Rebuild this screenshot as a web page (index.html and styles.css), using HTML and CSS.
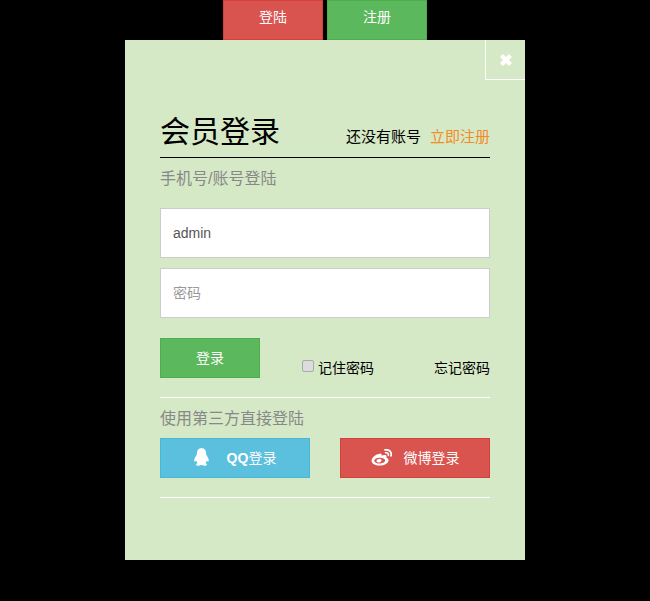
FILE: index.html
```html
<!DOCTYPE html>
<html lang="zh-CN">

<head>
    <meta charset="UTF-8">
    <meta name="viewport" content="width=device-width, initial-scale=1.0">
    <title>会员登录</title>
    <link rel="stylesheet" href="styles.css">
</head>

<body>
    <div class="top-btns">
        <a class="btn btn-red top-btn">登陆</a>
        <a class="btn btn-green top-btn">注册</a>
    </div>
    <div class="modal">
        <a class="close">
            <svg viewBox="0 0 14 14" width="14" height="14">
                <path d="M1 4 L4 1 L7 4 L10 1 L13 4 L10 7 L13 10 L10 13 L7 10 L4 13 L1 10 L4 7 Z" fill="#fff" />
            </svg>
        </a>
        <div class="head">
            <span class="head-title">会员登录</span>
            <span class="head-reg">还没有账号<a class="reg-link">立即注册</a></span>
        </div>
        <p class="sub sub-first">手机号/账号登陆</p>
        <input class="field" type="text" value="admin">
        <input class="field field-pass" type="password" placeholder="密码">
        <div class="actions">
            <a class="btn btn-green login-btn">登录</a>
            <label class="remember"><input type="checkbox">记住密码</label>
            <a class="forgot">忘记密码</a>
        </div>
        <p class="sub sub-second">使用第三方直接登陆</p>
        <div class="social">
            <a class="btn btn-blue social-btn">
                <svg class="icon-qq" viewBox="0 0 15 18" width="15" height="18">
                    <path d="M7.5 0 C4.5 0 3 2.2 3 5 C3 6.2 2.6 7 1.8 8.3 C0.8 10 0 11.8 0.3 13.2 C0.5 14 1.3 13.6 2.2 12.4 C2.5 13.6 3 14.6 3.6 15.2 C2.4 15.6 1.8 16.2 2.2 17 C2.8 18 5.6 18 7 17 L8 17 C9.4 18 12.2 18 12.8 17 C13.2 16.2 12.6 15.6 11.4 15.2 C12 14.6 12.5 13.6 12.8 12.4 C13.7 13.6 14.5 14 14.7 13.2 C15 11.8 14.2 10 13.2 8.3 C12.4 7 12 6.2 12 5 C12 2.2 10.5 0 7.5 0 Z" fill="#fff" />
                </svg>
                <span class="social-text"><b class="qq">QQ</b>登录</span>
            </a>
            <a class="btn btn-red social-btn">
                <svg class="icon-weibo" viewBox="0.5 2 19.5 16.5" width="21" height="17" preserveAspectRatio="none">
                    <path fill-rule="evenodd" d="M9 6.5 C4.8 7 1 10.2 1 13.4 C1 16.4 4.6 18 8.4 18 C13 18 16.8 15.6 16.8 12.8 C16.8 11.4 15.6 10.8 14.7 10.5 C15.1 9.5 15.1 8.6 14.4 8.1 C13.4 7.4 11.6 7.8 10.2 8.4 C10.5 7.4 10.4 6.3 9 6.5 Z M8.2 10.6 C11 10.4 13.4 11.4 13.6 13 C13.7 14.6 11.8 15.9 9 16.1 C6.1 16.3 3.8 15.2 3.6 13.6 C3.5 12 5.4 10.8 8.2 10.6 Z" fill="#fff" />
                    <path d="M8 11.6 C6.4 11.8 5.3 12.8 5.6 14 C6 15.1 7.4 15.5 8.7 15 C10 14.5 10.6 13.4 10.2 12.5 C9.8 11.8 8.9 11.5 8 11.6 Z" fill="#fff" />
                    <path d="M13.5 2.9 C17.3 2.1 20 5 19.1 8.6" fill="none" stroke="#fff" stroke-width="1.7" stroke-linecap="round" />
                    <path d="M14 5.6 C15.8 5.3 17 6.4 16.6 8.2" fill="none" stroke="#fff" stroke-width="1.5" stroke-linecap="round" />
                </svg>
                <span class="social-text">微博登录</span>
            </a>
        </div>
        <div class="foot-line"></div>
    </div>
</body></html>
```

FILE: styles.css
```css
html,
body {
    margin: 0;
    padding: 0;
    height: 601px;
    background: #000;
    font-family: "Liberation Sans", "Noto Sans CJK SC", sans-serif;
    font-size: 14px;
    overflow: hidden;
}

.btn {
    display: flex;
    align-items: center;
    justify-content: center;
    box-sizing: border-box;
    height: 40px;
    padding-bottom: 2px;
    color: #fff;
    border: 1px solid transparent;
}

.btn-red {
    background: #d9534f;
    border-color: #d43f3a;
}

.btn-green {
    background: #5cb85c;
    border-color: #4cae4c;
}

.btn-blue {
    background: #5bc0de;
    border-color: #46b8da;
}

.top-btns {
    display: flex;
    justify-content: center;
    gap: 4px;
}

.top-btn {
    width: 100px;
    padding-bottom: 9px;
}

.modal {
    position: relative;
    box-sizing: border-box;
    width: 400px;
    height: 520px;
    margin: 0 auto;
    padding: 0 35px;
    background: #d6e9c6;
}

.close {
    position: absolute;
    top: 0;
    right: 0;
    display: flex;
    align-items: center;
    justify-content: center;
    box-sizing: border-box;
    width: 40px;
    height: 40px;
    border-left: 1px solid #fff;
    border-bottom: 1px solid #fff;
}

.head {
    display: flex;
    justify-content: space-between;
    align-items: flex-end;
    box-sizing: border-box;
    height: 118px;
    padding-bottom: 10px;
    border-bottom: 1px solid #000;
    color: #000;
}

.head-title {
    font-size: 30px;
    line-height: 30px;
}

.head-reg {
    font-size: 15px;
    line-height: 20px;
}

.reg-link {
    margin-left: 9px;
    color: #f28c28;
}

.sub {
    margin: 0;
    color: #888;
    font-size: 16px;
    line-height: 22px;
}

.sub-first {
    margin-top: 10px;
    margin-bottom: 18px;
}

.sub-second {
    margin-top: 10px;
    margin-bottom: 8px;
}

.field {
    display: block;
    box-sizing: border-box;
    width: 100%;
    height: 50px;
    padding: 0 12px 1px;
    border: 1px solid #ccc;
    background: #fff;
    color: #555;
    font-family: inherit;
    font-size: 14px;
    outline: none;
}

.field-pass {
    margin-top: 10px;
}

.field::placeholder {
    color: #999;
}

.actions {
    display: flex;
    align-items: flex-end;
    height: 59px;
    margin-top: 20px;
    border-bottom: 1px solid #fff;
    color: #000;
}

.login-btn {
    width: 100px;
    align-self: flex-start;
}

.remember {
    display: flex;
    align-items: center;
    margin-left: 41px;
    margin-bottom: 19px;
    line-height: 20px;
}

.remember input {
    appearance: none;
    box-sizing: border-box;
    width: 12px;
    height: 12px;
    margin: 0 4px 5px 1px;
    background: #dcdcdc;
    border: 1px solid #aaa;
    border-radius: 2px;
}

.forgot {
    margin-left: auto;
    margin-bottom: 19px;
    line-height: 20px;
}

.social {
    display: flex;
    justify-content: space-between;
}

.social-btn {
    width: 150px;
    gap: 0;
}

.social-text {
    font-size: 14px;
}

.qq {
    font-weight: bold;
}

.icon-qq {
    margin-right: 18px;
}

.icon-weibo {
    margin-right: 12px;
}

.foot-line {
    margin-top: 19px;
    border-top: 1px solid #fff;
}
```
